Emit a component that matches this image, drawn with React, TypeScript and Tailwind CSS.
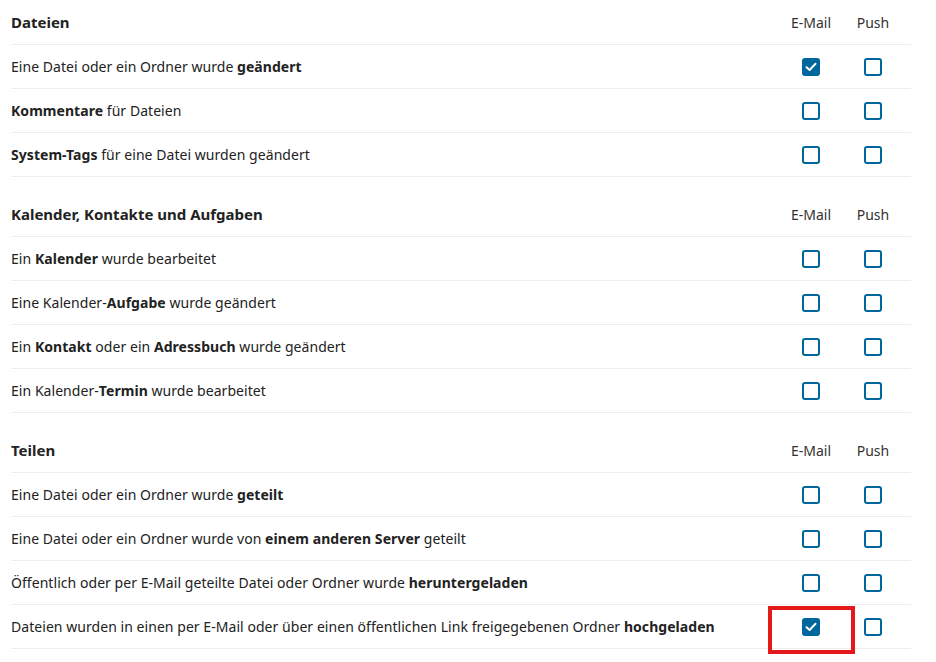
import React from 'react'

type Row = { parts: [string, boolean][]; email: boolean; push: boolean; marked?: boolean }
type Section = { title: string; rows: Row[] }

const sections: Section[] = [
  {
    title: 'Dateien',
    rows: [
      { parts: [['Eine Datei oder ein Ordner wurde ', false], ['geändert', true]], email: true, push: false },
      { parts: [['Kommentare', true], [' für Dateien', false]], email: false, push: false },
      { parts: [['System-Tags', true], [' für eine Datei wurden geändert', false]], email: false, push: false },
    ],
  },
  {
    title: 'Kalender, Kontakte und Aufgaben',
    rows: [
      { parts: [['Ein ', false], ['Kalender', true], [' wurde bearbeitet', false]], email: false, push: false },
      { parts: [['Eine Kalender-', false], ['Aufgabe', true], [' wurde geändert', false]], email: false, push: false },
      {
        parts: [['Ein ', false], ['Kontakt', true], [' oder ein ', false], ['Adressbuch', true], [' wurde geändert', false]],
        email: false,
        push: false,
      },
      { parts: [['Ein Kalender-', false], ['Termin', true], [' wurde bearbeitet', false]], email: false, push: false },
    ],
  },
  {
    title: 'Teilen',
    rows: [
      { parts: [['Eine Datei oder ein Ordner wurde ', false], ['geteilt', true]], email: false, push: false },
      {
        parts: [['Eine Datei oder ein Ordner wurde von ', false], ['einem anderen Server', true], [' geteilt', false]],
        email: false,
        push: false,
      },
      {
        parts: [['Öffentlich oder per E-Mail geteilte Datei oder Ordner wurde ', false], ['heruntergeladen', true]],
        email: false,
        push: false,
      },
      {
        parts: [
          ['Dateien wurden in einen per E-Mail oder über einen öffentlichen Link freigegebenen Ordner ', false],
          ['hochgeladen', true],
        ],
        email: true,
        push: false,
        marked: true,
      },
    ],
  },
]

function Checkbox({ checked }: { checked: boolean }) {
  if (checked) {
    return (
      <span className="w-[18px] h-[18px] rounded-[3px] bg-[#00679e] flex items-center justify-center">
        <svg width="12" height="10" viewBox="0 0 12 10" fill="none">
          <path d="M1.5 5.2 L4.6 8 L10.5 1.8" stroke="white" strokeWidth="2" strokeLinecap="round" strokeLinejoin="round" />
        </svg>
      </span>
    )
  }
  return <span className="w-[18px] h-[18px] rounded-[3px] border-2 border-[#00679e] bg-white block" />
}

export default function App() {
  return (
    <div className="w-[936px] h-[662px] bg-white overflow-hidden pt-[1px] text-[#222222] text-[14px] font-['Noto_Sans','Open_Sans',sans-serif]">
      <div className="w-[900px] ml-[11px] flex flex-col gap-4">
        {sections.map((section) => (
          <div key={section.title} className="flex flex-col">
            {/* Section header */}
            <div className="h-[44px] grid grid-cols-[1fr_62px_62px_7px] items-center border-b border-[#ededed]">
              <span className="font-bold text-[15px]">{section.title}</span>
              <span className="text-center text-[#333]">E-Mail</span>
              <span className="text-center text-[#333]">Push</span>
              <span />
            </div>
            {section.rows.map((row, i) => (
              <div key={i} className="h-[44px] grid grid-cols-[1fr_62px_62px_7px] items-center border-b border-[#ededed]">
                <span className="whitespace-nowrap tracking-[0.05px]">
                  {row.parts.map(([text, bold], j) =>
                    bold ? (
                      <strong key={j} className="font-bold">
                        {text}
                      </strong>
                    ) : (
                      <React.Fragment key={j}>{text}</React.Fragment>
                    ),
                  )}
                </span>
                <span className="relative flex justify-center">
                  <Checkbox checked={row.email} />
                  {row.marked && (
                    <span className="absolute left-[-12px] top-[-12px] w-[87px] h-[48px] border-4 border-[#e3191b]" />
                  )}
                </span>
                <span className="flex justify-center">
                  <Checkbox checked={row.push} />
                </span>
                <span />
              </div>
            ))}
          </div>
        ))}
      </div>
    </div>
  )
}
